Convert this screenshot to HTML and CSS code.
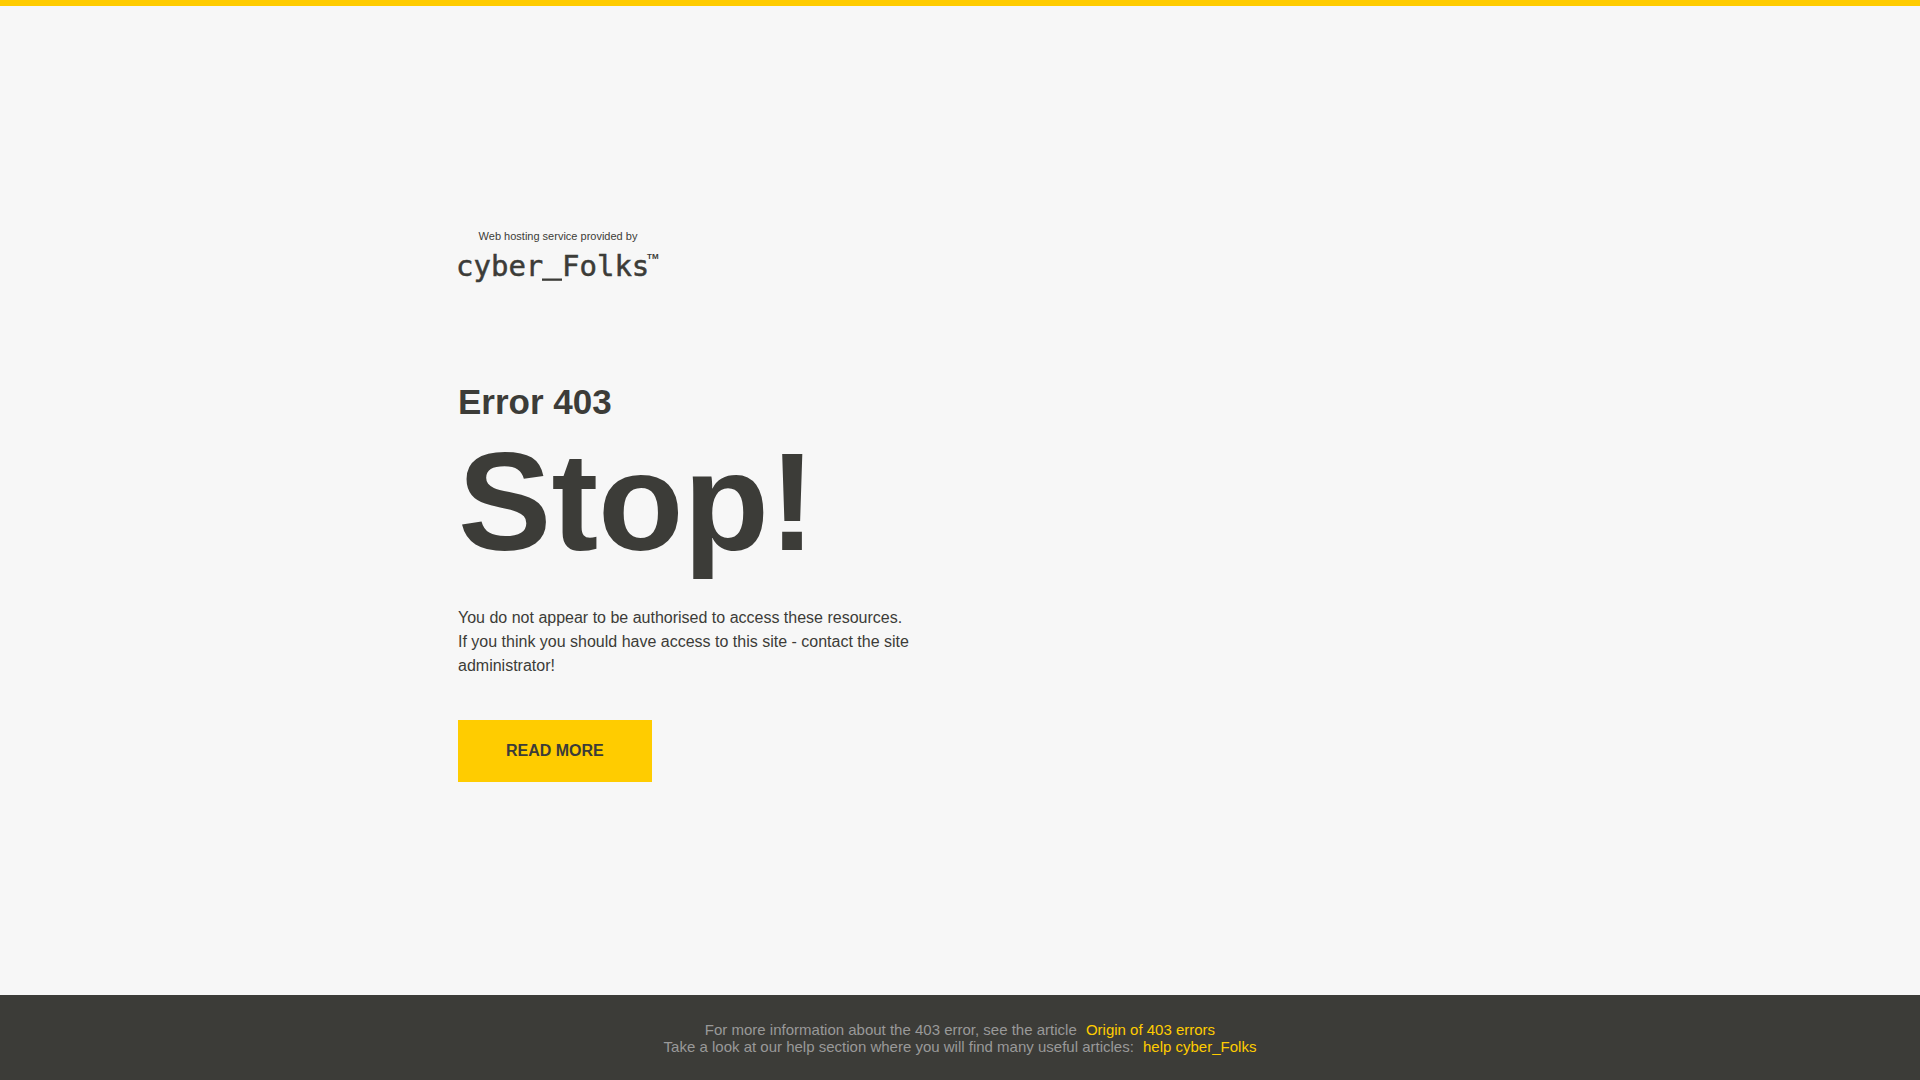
FILE: index.html
```html
<!DOCTYPE html>
<html lang="en">
<head>
    <meta charset="UTF-8">
    <meta name="viewport" content="width=device-width, initial-scale=1.0">
    <link rel="stylesheet" href="styles.css">
    <title>Error 403</title>
</head>
<body>

    <main class="content">
        <div class="container">
            <div class="provider">
                <p class="provider-text">Web hosting service provided by</p>
                <svg class="logo" width="200" height="34" viewBox="0 0 200 34" role="img" aria-label="cyber_Folks">
                    <text class="logo-name" x="-2" y="27">cyber</text>
                    <rect x="84" y="29.5" width="20" height="2.3"/>
                    <text class="logo-name" x="104" y="27">Folks</text>
                    <text class="logo-tm" x="189" y="10">TM</text>
                </svg>
            </div>

            <div class="message">
                <h2 class="error-code">Error 403</h2>
                <h1 class="error-title">Stop!</h1>
                <p class="error-text">You do not appear to be authorised to access these resources.<br>
                If you think you should have access to this site - contact the site administrator!</p>
                <a href="#" class="button">READ MORE</a>
            </div>
        </div>
    </main>

    <footer class="footer">
        <p>For more information about the 403 error, see the article <a href="#">Origin of 403 errors</a></p>
        <p>Take a look at our help section where you will find many useful articles: <a href="#">help cyber_Folks</a></p>
    </footer>

</body>
</html>
```

FILE: styles.css
```css
* {
    box-sizing: border-box;
}

body {
    display: flex;
    flex-direction: column;
    min-height: 100vh;
    margin: 0;
    border-top: 6px solid #ffcc00;
    font-family: "Liberation Sans", Arial, sans-serif;
    font-size: 16px;
    line-height: 24px;
    color: #3c3c38;
    background-color: #f7f7f7;
}

h1,
h2,
p {
    margin: 0;
}

.content {
    display: flex;
    flex: 1;
    align-items: center;
    padding: 10px 20px 0;
}

.container {
    width: 100%;
    max-width: 1004px;
    margin: 0 auto;
}

.provider {
    width: 200px;
    margin-bottom: 99px;
}

.provider-text {
    margin-bottom: 6px;
    font-size: 11px;
    line-height: 13px;
    text-align: center;
}

.logo {
    display: block;
    overflow: visible;
    fill: #3c3c38;
}

.logo-name {
    font-family: "DejaVu Sans Mono", monospace;
    font-size: 29px;
    stroke: #3c3c38;
    stroke-width: 0.5;
}

.logo-tm {
    font-size: 8px;
    font-weight: bold;
}

.message {
    max-width: 502px;
}

.error-code {
    margin-bottom: 10px;
    font-size: 35px;
    line-height: 40px;
}

.error-title {
    margin-bottom: 34px;
    font-size: 140px;
    line-height: 140px;
}

.error-text {
    margin-bottom: 42px;
}

.button {
    display: block;
    width: fit-content;
    padding: 19px 48px;
    font-weight: bold;
    color: #3c3c38;
    background-color: #ffcc00;
    text-decoration: none;
}

.footer {
    padding: 26px 20px 25px;
    font-size: 15px;
    line-height: 17px;
    text-align: center;
    color: #999999;
    background-color: #3c3c38;
}

.footer a {
    margin-left: 5px;
    color: #ffcc00;
    text-decoration: none;
}
```
